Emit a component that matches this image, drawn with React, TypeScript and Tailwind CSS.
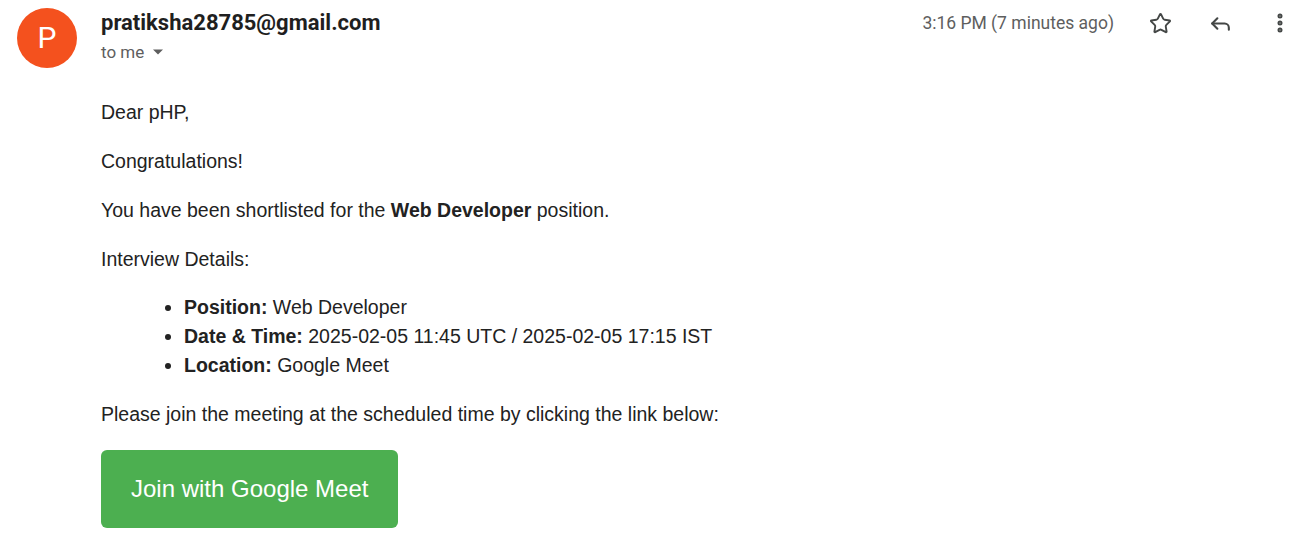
import { Star, Reply, EllipsisVertical } from "lucide-react";

const App = () => {
  return (
    <div className="min-h-screen bg-white flex pl-[17px] pt-[8px]">
      {/* Avatar */}
      <div className="w-[60px] h-[60px] rounded-full bg-[#f4511e] flex items-center justify-center shrink-0">
        <span className="text-white text-[30px] font-['Roboto',sans-serif] leading-none">P</span>
      </div>

      <div className="flex-1 ml-[24px]">
        {/* Header */}
        <div className="flex items-start">
          <div className="flex-1 font-['Roboto',sans-serif]">
            <div className="text-[22px] font-bold text-[#1f1f1f] leading-[28px] pt-[1px]">
              pratiksha28785@gmail.com
            </div>
            <div className="flex items-center text-[17px] text-[#5e5e5e] leading-[28px] mt-[1px]">
              to me
              <svg width="12" height="8" viewBox="0 0 12 8" className="ml-[8px]">
                <path d="M1 1.5 L6 6.5 L11 1.5 Z" fill="#5e5e5e" />
              </svg>
            </div>
          </div>
          <div className="flex items-center font-['Roboto',sans-serif] text-[17.5px] text-[#5e5e5e] pt-[1px]">
            <span>3:16 PM (7 minutes ago)</span>
            <div className="flex items-center ml-[22px] mr-[2px]">
              <button className="w-[48px] h-[28px] flex items-center justify-center">
                <Star size={23} strokeWidth={2} color="#444746" />
              </button>
              <button className="w-[48px] h-[28px] flex items-center justify-center ml-[12px]">
                <Reply size={25} strokeWidth={2} color="#444746" />
              </button>
              <button className="w-[48px] h-[28px] flex items-center justify-center ml-[12px]">
                <EllipsisVertical size={24} strokeWidth={3} color="#444746" />
              </button>
            </div>
          </div>
        </div>

        {/* Body */}
        <div className="font-['Liberation_Sans',Arial,sans-serif] text-[19.5px] text-[#222222] leading-[29px] mt-[32px]">
          <p>Dear pHP,</p>
          <p className="mt-[20px]">Congratulations!</p>
          <p className="mt-[20px]">
            You have been shortlisted for the <b>Web Developer</b> position.
          </p>
          <p className="mt-[20px]">Interview Details:</p>
          <ul className="list-disc pl-[83px] mt-[19px]">
            <li>
              <b>Position:</b> Web Developer
            </li>
            <li>
              <b>Date &amp; Time:</b> 2025-02-05 11:45 UTC / 2025-02-05 17:15 IST
            </li>
            <li>
              <b>Location:</b> Google Meet
            </li>
          </ul>
          <p className="mt-[20px]">
            Please join the meeting at the scheduled time by clicking the link below:
          </p>
          <a
            href="#"
            className="inline-block mt-[21px] bg-[#4caf50] text-white text-[24px] leading-[29px] px-[30px] pt-[24px] pb-[25px] rounded-[6px]"
          >
            Join with Google Meet
          </a>
        </div>
      </div>
    </div>
  );
};

export default App;
